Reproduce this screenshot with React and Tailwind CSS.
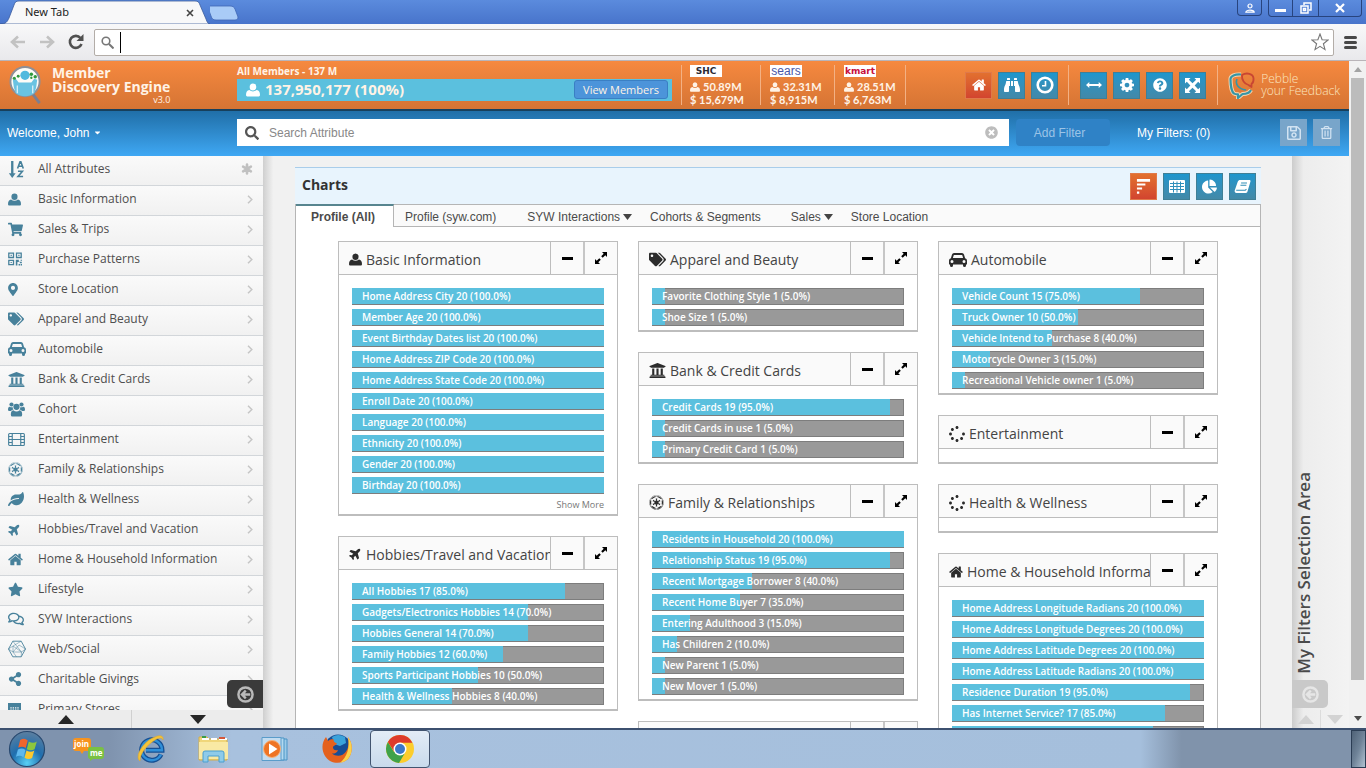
import React from "react";
import {
  FaShoppingCart, FaMapMarkerAlt, FaTags, FaUniversity, FaEmpire, FaLeaf,
  FaPlane, FaStar, FaRegComments, FaShareAlt, FaSpinner, FaBinoculars,
  FaQuestionCircle, FaRegSave, FaRegTrashAlt, FaChartPie,
  FaSearch, FaTimesCircle, FaCaretDown,
} from "react-icons/fa";

function UserIcon(props) {
  return (
    <svg viewBox="0 0 14 13" width="1em" height="1em" fill="currentColor" {...props}>
      <ellipse cx="7" cy="3.500" rx="3.300" ry="3.500" />
      <path d="M1.200 13Q0 13 0 11.600Q0 7.200 3.300 6.600Q5 7.900 7 7.900Q9 7.900 10.700 6.600Q14 7.200 14 11.600Q14 13 12.800 13Z" />
    </svg>
  );
}

function HomeIcon(props) {
  return (
    <svg viewBox="64 128 1664 1536" width="1em" height="1em" fill="currentColor" {...props}>
      <path d="M1472 992v480q0 26-19 45t-45 19h-384v-384h-256v384h-384q-26 0-45-19t-19-45v-480q0-1 .5-3t.5-3l575-474 575 474q1 2 1 6zm223-69l-62 74q-8 9-21 11h-3q-13 0-21-7l-692-577-692 577q-12 8-24 7-13-2-21-11l-62-74q-8-10-7-23.5t11-21.5l719-599q32-26 76-26t76 26l244 204v-195q0-14 9-23t23-9h192q14 0 23 9t9 23v408l219 182q10 8 11 21.5t-7 23.5z" />
    </svg>
  );
}

function CogIcon(props) {
  return (
    <svg viewBox="128 128 1536 1536" width="1em" height="1em" fill="currentColor" {...props}>
      <path d="M1152 896q0-106-75-181t-181-75-181 75-75 181 75 181 181 75 181-75 75-181zm512-109v222q0 12-8 23t-20 13l-185 28q-19 54-39 91 35 50 107 138 10 12 10 25t-9 23q-27 37-99 108t-94 71q-12 0-26-9l-138-108q-44 23-91 38-16 136-29 186-7 28-36 28h-222q-14 0-24.5-8.5t-11.5-21.5l-28-184q-49-16-90-37l-141 107q-10 9-25 9-14 0-25-11-126-114-165-168-7-10-7-23 0-12 8-23 15-21 51-66.5t54-70.5q-27-50-41-99l-183-27q-13-2-21-12.5t-8-23.5v-222q0-12 8-23t19-13l186-28q14-46 39-92-40-57-107-138-10-12-10-24 0-10 9-23 26-36 98.5-107.5t94.5-71.5q13 0 26 10l138 107q44-23 91-38 16-136 29-186 7-28 36-28h222q14 0 24.5 8.5t11.5 21.5l28 184q49 16 90 37l142-107q9-9 24-9 13 0 25 10 129 119 165 170 7 8 7 22 0 12-8 23-15 21-51 66.5t-54 70.5q26 50 41 98l183 28q13 2 21 12.5t8 23.5z" />
    </svg>
  );
}

function SortIcon(props) {
  return (
    <svg viewBox="0 0 16 16" width="1em" height="1em" fill="none" stroke="currentColor" {...props}>
      <path d="M4 0V13" strokeWidth="2.200" />
      <path d="M.8 11.500h6.400L4 16z" fill="currentColor" stroke="none" />
      <path d="M9 7l2.300-6.200h.8L14.400 7M9.800 5h3.800" strokeWidth="1.500" />
      <path d="M9.400 9.600h4.200l-4.200 5h4.800" strokeWidth="1.500" />
    </svg>
  );
}

function QrIcon(props) {
  return (
    <svg viewBox="0 0 14 13" width="1em" height="1em" fill="none" stroke="currentColor" strokeWidth="1.300" {...props}>
      <path d="M.8.7h4.700v4.300H.8zM8.500.7h4.700v4.300H8.500zM.8 7.800h4.700v4.400H.8z" />
      <path d="M2.600 2.300h1.200v1.200H2.600zM10.300 2.300h1.200v1.200h-1.200zM2.600 9.400h1.200v1.200H2.600zM7.800 7.200h3v2h3v1.600h-2v-1.200H9.400V13H7.800zM10.600 11.500H12V13h-1.400zM12.600 11.500H14V13h-1.400zM12.600 7.200H14v1h-1.400z" fill="currentColor" stroke="none" />
    </svg>
  );
}

function CarIcon(props) {
  return (
    <svg viewBox="0 0 18 14" width="1em" height="1em" fill="currentColor" {...props}>
      <path fillRule="evenodd" d="M5 0h8q1.500 0 2 1.500l1.100 3.700Q18 5.800 18 7.500V11q0 .5-.5.500H17V12.500Q17 14 15.500 14T14 12.500v-1H4v1Q4 14 2.500 14T1 12.500v-1H.5Q0 11.500 0 11V7.500Q0 5.800 1.900 5.200L3 1.500Q3.500 0 5 0zM5.200 1.900q-.5 0-.6.500L3.900 5h10.200l-.7-2.600q-.1-.5-.6-.500zM3 6.900a1.500 1.500 0 1 0 0 3 1.500 1.500 0 0 0 0-3zM15 6.900a1.500 1.500 0 1 0 0 3 1.500 1.500 0 0 0 0-3z" />
    </svg>
  );
}

function GroupIcon(props) {
  return (
    <svg viewBox="0 0 18 15" width="1em" height="1em" fill="currentColor" {...props}>
      <circle cx="3.700" cy="2.200" r="2.200" /><circle cx="14.300" cy="2.200" r="2.200" /><circle cx="9" cy="4.700" r="3.300" />
      <path d="M0 8Q0 4.500 1.800 4.500Q3.700 5.500 4.900 4.900Q4.900 6.500 5.800 7.600Q4 7.700 3.200 9H1.500Q0 9 0 8zM18 8Q18 4.500 16.200 4.500Q14.300 5.500 13.100 4.900Q13.100 6.500 12.200 7.600Q14 7.700 14.800 9H16.500Q18 9 18 8z" />
      <path d="M4.600 15Q3 15 3 13Q3 8.600 5.600 8.300Q7.300 9.600 9 9.600Q10.700 9.600 12.400 8.300Q15 8.600 15 13Q15 15 13.400 15Z" />
    </svg>
  );
}

function FilmIcon(props) {
  return (
    <svg viewBox="0 0 18 14" width="1em" height="1em" fill="none" stroke="currentColor" strokeWidth="1.200" {...props}>
      <rect x=".7" y=".7" width="16.600" height="12.600" rx="1" />
      <path d="M4.500.7v12.600M13.500.7v12.600M4.500 7h9M.7 3.800h3.800M.7 7h3.800M.7 10.200h3.800M13.500 3.800h3.800M13.500 7h3.800M13.500 10.200h3.800" />
    </svg>
  );
}

function WebIcon(props) {
  return (
    <svg viewBox="0 0 18 18" width="1em" height="1em" fill="none" stroke="currentColor" strokeWidth="0.900" {...props}>
      <path d="M4.800 1.200h8.400L17.500 9l-4.300 7.800H4.800L.5 9z" />
      <path d="M4.800 1.200L13.500 12 13.200 16.800M13.200 1.200L5 6v6l8.500 0M5 6L.5 9 5 12l3.500 4.800M17.500 9L11 5 5 12M5 6l8.500 6L17.500 9" opacity=".55" />
    </svg>
  );
}

function StoreIcon(props) {
  return (
    <svg viewBox="0 0 14 14" width="1em" height="1em" fill="currentColor" {...props}>
      <path fillRule="evenodd" d="M0 0h14v14H0zM2.500 4.500v1.500H4V4.500zM5 4.500v1.500h1.500V4.500zM7.500 4.500v1.500H9V4.500zM10 4.500v1.500h1.500V4.500zM2.500 7v1.500H4V7zM5 7v1.500h1.500V7zM7.500 7v1.500H9V7zM10 7v1.500h1.500V7z" />
    </svg>
  );
}

function AsteriskIcon() {
  return (
    <svg viewBox="0 0 12 12" width="12" height="12" stroke="#c0c0c0" strokeWidth="2.600" strokeLinecap="round">
      <path d="M6 1.500v9M2.100 3.700l7.800 4.600M9.900 3.700L2.100 8.300" />
    </svg>
  );
}

function ClockIcon() {
  return (
    <svg viewBox="0 0 18 18" width="18" height="18" fill="none" stroke="#fff">
      <circle cx="9" cy="9" r="7.300" strokeWidth="2.600" />
      <path d="M9.500 5v4.800H6" strokeWidth="1.600" />
    </svg>
  );
}

function ArrowsOut() {
  return (
    <svg viewBox="0 0 14 14" width="15" height="15" fill="#fff">
      <path d="M0 0h5.200L3.600 1.700 7 5l3.400-3.300L8.800 0H14v5.200l-1.700-1.600L9 7l3.300 3.400L14 8.800V14H8.800l1.600-1.700L7 9l-3.400 3.300L5.200 14H0V8.800l1.700 1.600L5 7 1.700 3.600 0 5.200z" />
    </svg>
  );
}

function TableIcon() {
  return (
    <svg viewBox="0 0 16 13" width="16" height="13">
      <rect width="16" height="13" rx="1" fill="#fff" />
      <path d="M1 3.500h14M1 6.500h14M1 9.500h14M4.500 1.500v11M8 1.500v11M11.500 1.500v11" stroke="#2f8fbb" strokeWidth="1" />
    </svg>
  );
}

function BookIcon() {
  return (
    <svg viewBox="0 0 18 16" width="17" height="15">
      <path d="M6.500 1h9.800c1 0 1.500.7 1.200 1.600l-3.200 10.600c-.3 1-1 1.600-2 1.600H2.500C1 14.800.3 13.500.7 12.300L3.900 3C4.400 1.700 5.300 1 6.500 1z" fill="#fff" />
      <path d="M7.500 4.300h6.300M6.800 6.700h6.300M2.300 11.900h9.700l1.200-1" stroke="#328fb6" strokeWidth="1.100" fill="none" />
    </svg>
  );
}

function BarsIcon() {
  return (
    <svg viewBox="0 0 16 18" width="15" height="17" fill="#fff">
      <path d="M1 1h14v2.800H1zM1 5.800h9v2.200H1zM1 10h5.500v2.100H1zM1 14.300h2.500v2.300H1z" />
    </svg>
  );
}

function ArrowsH() {
  return (
    <svg viewBox="0 0 16 8" width="16" height="8" fill="#fff">
      <path d="M0 4L3.300 1v2h9.400V1L16 4l-3.300 3V5H3.300v2z" />
    </svg>
  );
}

function ExpandIcon() {
  return (
    <svg viewBox="0 0 12 12" width="12" height="12" fill="#000">
      <path d="M12 0v5l-1.700-1.700L7.700 5.800 6.200 4.300 8.700 1.700 7 0zM0 12V7l1.700 1.700 2.600-2.500 1.500 1.500-2.500 2.600L5 12z" />
    </svg>
  );
}

function LeftCircle() {
  return (
    <svg viewBox="0 0 18 18" width="17" height="17" fill="none" stroke="currentColor" strokeWidth="2.600">
      <circle cx="9" cy="9" r="7.500" />
      <path d="M14 9H6M9.300 5L5.300 9l4 4" />
    </svg>
  );
}

const PlaneUp = (props) => (
  <span className="inline-block -rotate-45">
    <FaPlane {...props} />
  </span>
);

const navItems = [
  ["All Attributes", SortIcon, "size-[17px]"],
  ["Basic Information", UserIcon, "size-[13px]"],
  ["Sales & Trips", FaShoppingCart, "size-[15px]"],
  ["Purchase Patterns", QrIcon, "size-[14px]"],
  ["Store Location", FaMapMarkerAlt, "h-[13px] w-[10px]"],
  ["Apparel and Beauty", FaTags, "size-4"],
  ["Automobile", CarIcon, "size-[18px]"],
  ["Bank & Credit Cards", FaUniversity, "size-[17px]"],
  ["Cohort", GroupIcon, "size-[17px]"],
  ["Entertainment", FilmIcon, "size-[17px]"],
  ["Family & Relationships", FaEmpire, "size-[15px]"],
  ["Health & Wellness", FaLeaf, "size-4"],
  ["Hobbies/Travel and Vacation", PlaneUp, "size-[13px]"],
  ["Home & Household Information", HomeIcon, "size-[15px]"],
  ["Lifestyle", FaStar, "size-[15px]"],
  ["SYW Interactions", FaRegComments, "size-4"],
  ["Web/Social", WebIcon, "size-[18px]"],
  ["Charitable Givings", FaShareAlt, "size-[14px]"],
  ["Primary Stores", StoreIcon, "size-[13px]"],
];

const columns = [
  [
    {
      title: "Basic Information", icon: UserIcon, size: "size-[13px]", more: true,
      rows: [
        ["Home Address City", 20], ["Member Age", 20], ["Event Birthday Dates list", 20],
        ["Home Address ZIP Code", 20], ["Home Address State Code", 20], ["Enroll Date", 20],
        ["Language", 20], ["Ethnicity", 20], ["Gender", 20], ["Birthday", 20],
      ],
    },
    {
      title: "Hobbies/Travel and Vacation", icon: PlaneUp, size: "size-[13px]",
      rows: [
        ["All Hobbies", 17], ["Gadgets/Electronics Hobbies", 14], ["Hobbies General", 14],
        ["Family Hobbies", 12], ["Sports Participant Hobbies", 10], ["Health & Wellness Hobbies", 8],
      ],
    },
  ],
  [
    { title: "Apparel and Beauty", icon: FaTags, size: "size-[17px]", rows: [["Favorite Clothing Style", 1], ["Shoe Size", 1]] },
    {
      title: "Bank & Credit Cards", icon: FaUniversity, size: "size-[17px]",
      rows: [["Credit Cards", 19], ["Credit Cards in use", 1], ["Primary Credit Card", 1]],
    },
    {
      title: "Family & Relationships", icon: FaEmpire, size: "size-[15px]",
      rows: [
        ["Residents in Household", 20], ["Relationship Status", 19], ["Recent Mortgage Borrower", 8],
        ["Recent Home Buyer", 7], ["Entering Adulthood", 3], ["Has Children", 2], ["New Parent", 1], ["New Mover", 1],
      ],
    },
    { title: "Lifestyle", icon: FaStar, size: "size-[15px]", rows: [] },
  ],
  [
    {
      title: "Automobile", icon: CarIcon, size: "size-[18px]",
      rows: [
        ["Vehicle Count", 15], ["Truck Owner", 10], ["Vehicle Intend to Purchase", 8],
        ["Motorcycle Owner", 3], ["Recreational Vehicle owner", 1],
      ],
    },
    { title: "Entertainment", icon: FaSpinner, size: "size-4", rows: [] },
    { title: "Health & Wellness", icon: FaSpinner, size: "size-4", rows: [] },
    {
      title: "Home & Household Information", icon: HomeIcon, size: "size-[14px]",
      rows: [
        ["Home Address Longitude Radians", 20], ["Home Address Longitude Degrees", 20],
        ["Home Address Latitude Degrees", 20], ["Home Address Latitude Radians", 20],
        ["Residence Duration", 19], ["Has Internet Service?", 17], ["Home Owner", 16],
      ],
    },
  ],
];

function BrowserChrome() {
  return (
    <div className="shrink-0 font-['Open_Sans',sans-serif]">
      <div className="flex h-6 items-end bg-linear-to-b from-[#5b8bdd] to-[#4874cb]">
        <div className="relative h-6 w-[210px]">
          <svg viewBox="0 0 210 24" width="210" height="24" className="absolute inset-0">
            <path d="M0 24C6 24 7 22 9 18L14 5C15 2 16 1 19 1H195C198 1 199 2 200 5L206 19C207 22 208 24 210 24Z" fill="#f8f8f9" stroke="#3b5c9d" strokeWidth=".8" />
          </svg>
          <div className="relative flex h-6 items-center justify-between pt-px pr-4 pl-[25px] text-[#222]">
            <span className="font-['Noto_Sans',sans-serif] text-[11px]">New Tab</span>
            <button aria-label="Close tab">
              <svg viewBox="0 0 8 8" width="8" height="8" stroke="#444" strokeWidth="1.600"><path d="M1 1l6 6M7 1L1 7" /></svg>
            </button>
          </div>
        </div>
        <button aria-label="New tab" className="h-full">
          <svg viewBox="0 0 32 24" width="32" height="24">
            <path d="M-2 6H20C23 6 24 7 25 9L28 17C28 19 27 20 25 20H6C3 20 2 19 1 16L-2 8Z" fill="#a9cbf7" stroke="#3f66b4" strokeWidth=".8" />
          </svg>
        </button>
        <div className="mr-1 ml-auto flex gap-[6px] self-start text-white">
          <button aria-label="Account" className="grid h-4 w-[25px] place-items-center rounded-b border border-t-0 border-[#28447e]">
            <svg viewBox="0 0 10 10" width="10" height="10" fill="#5b8bdd" stroke="#fff" strokeWidth="1.200"><circle cx="5" cy="3" r="2" /><path d="M.8 9.200C.8 6.500 9.200 6.500 9.200 9.200Z" /></svg>
          </button>
          <div className="flex divide-x divide-[#28447e] rounded-b border border-t-0 border-[#28447e]">
            <button aria-label="Minimize" className="grid h-4 w-6 place-items-center">
              <span className="mt-1 h-[3px] w-[11px] bg-white" />
            </button>
            <button aria-label="Restore" className="grid h-4 w-[26px] place-items-center">
              <svg viewBox="0 0 12 12" width="12" height="12" fill="none" stroke="#fff" strokeWidth="1.500"><path d="M4 3V1h7v7H9" /><path d="M1 4h7v7H1zM3.500 6.500h2v2h-2z" /></svg>
            </button>
            <button aria-label="Close" className="grid h-4 w-[42px] place-items-center">
              <svg viewBox="0 0 10 10" width="10" height="10" stroke="#fff" strokeWidth="2.200"><path d="M1 1l8 8M9 1L1 9" /></svg>
            </button>
          </div>
        </div>
      </div>
      <div className="flex h-[37px] items-center border-b border-[#b9b4b8] bg-linear-to-b from-[#f8f8f9] to-[#e9e9ec] pl-[10px]">
        <div className="flex items-center gap-[13px] text-[#c2c2c2]">
          <svg viewBox="0 0 16 14" width="16" height="14" fill="none" stroke="currentColor" strokeWidth="2.600"><path d="M15 7H3M8 1.500L2 7l6 5.500" /></svg>
          <svg viewBox="0 0 16 14" width="16" height="14" fill="none" stroke="currentColor" strokeWidth="2.600"><path d="M1 7h12M8 1.500L14 7l-6 5.500" /></svg>
          <svg viewBox="0 0 16 16" width="16" height="16" fill="none" stroke="#505050" strokeWidth="2.600"><path d="M13.500 10A6 6 0 1 1 12.500 4" /><path d="M15.500 0v7H8.500z" fill="#505050" stroke="none" /></svg>
        </div>
        <label className="ml-[10px] flex h-[27px] flex-1 items-center rounded-xs border border-[#b3ada8] bg-white pr-1 pl-[6px]">
          <svg viewBox="0 0 13 13" width="13" height="13" fill="none" stroke="#777" strokeWidth="1.600"><circle cx="5" cy="5" r="3.800" /><path d="M8 8l4.500 4.500" strokeWidth="2" /></svg>
          <span className="ml-[6px] h-[21px] w-px bg-black" />
          <input aria-label="Address" className="h-full flex-1 outline-none" />
          <svg viewBox="0 0 18 18" width="18" height="18" fill="none" stroke="#777" strokeWidth="1.100"><path d="M9 1l2.100 5.700 6 .3-4.700 3.700 1.600 5.900L9 13.300 4 16.600l1.600-5.900L.9 7l6-.3z" /></svg>
        </label>
        <button aria-label="Menu" className="mr-[9px] ml-[10px] flex flex-col gap-[2px]">
          <span className="h-[3px] w-[13px] rounded-xs bg-[#484848]" />
          <span className="h-[3px] w-[13px] rounded-xs bg-[#484848]" />
          <span className="h-[3px] w-[13px] rounded-xs bg-[#484848]" />
        </button>
      </div>
    </div>
  );
}

function SquareButton({ label, active, children }) {
  return (
    <button
      aria-label={label}
      className={
        "grid size-[27px] place-items-center border text-white " +
        (active
          ? "border-[#e0794a] bg-linear-to-b from-[#e2702f] to-[#d2442f]"
          : "border-[#3f7f96] bg-linear-to-b from-[#1c96cd] to-[#4289a8]")
      }
    >
      {children}
    </button>
  );
}

function Divider() {
  return <span className="h-10 w-px bg-[#f3b184]" />;
}

function Stat({ logo, members, sales }) {
  return (
    <div className="pt-px font-['Lato',sans-serif] text-[11px] leading-[13px] font-bold text-[#fff3e6]">
      <div className="mb-[3px] flex h-3 w-8 items-center justify-center bg-white">{logo}</div>
      <div className="flex items-center gap-[3px]"><UserIcon className="size-[10px]" />{members}</div>
      <div>$ {sales}</div>
    </div>
  );
}

function AppHeader() {
  return (
    <header className="flex h-[48px] shrink-0 items-center bg-linear-to-b from-[#f6893f] to-[#d57434] text-[#fff3e6]">
      <div className="flex w-[237px] shrink-0 items-center pl-2">
        <svg viewBox="0 0 36 42" width="35" height="41">
          <path d="M25 29l7.500 10" stroke="#7b7f92" strokeWidth="3" />
          <circle cx="17.500" cy="17" r="15" fill="#fdfcf8" stroke="#8d8f98" strokeWidth="2" />
          <circle cx="17.500" cy="10.500" r="4.800" fill="#51b9de" />
          <path d="M5 15l3-1 3 4h13l3-4 3 1-1 8-2 6c-5 4-14 4-19 0l-2-6z" fill="#6ac3e2" />
          <path d="M9.500 21v8M25.500 21v8" stroke="#fff" strokeWidth="1" />
          <circle cx="6.500" cy="13.500" r="1.600" fill="#2f9a3c" /><circle cx="10.500" cy="11.500" r="1.500" fill="#2f9a3c" />
          <circle cx="24" cy="9.500" r="1.800" fill="#2f9a3c" /><circle cx="28" cy="12" r="1.800" fill="#2f9a3c" /><circle cx="24" cy="13" r="1.200" fill="#2f9a3c" />
        </svg>
        <div className="ml-[9px] pt-px font-['Open_Sans',sans-serif]">
          <h1 className="text-[14px] leading-[14px] font-bold">Member<br />Discovery Engine</h1>
          <p className="text-right text-[9px] leading-[11px]">v3.0</p>
        </div>
      </div>
      <div className="w-[435px] shrink-0 pb-[6px]">
        <div className="font-['Open_Sans',sans-serif] text-[10px] leading-[14px] font-bold">All Members - 137 M</div>
        <div className="mt-px flex h-[22px] items-center bg-[#5bc0de] pr-1 pl-[9px]">
          <UserIcon className="size-[14px] text-white" />
          <span className="ml-[5px] font-['Open_Sans',sans-serif] text-[15px] font-bold">137,950,177 (100%)</span>
          <button className="ml-auto h-[19px] w-[94px] rounded-[3px] border border-[#3a7fc4] bg-[#4c94da] font-['Open_Sans',sans-serif] text-[11px] leading-4">
            View Members
          </button>
        </div>
      </div>
      <div className="ml-[9px] flex items-center">
        <Divider />
        <div className="w-[78px] pl-2">
          <Stat logo={<span className="font-['DejaVu_Sans',sans-serif] text-[9px] font-bold text-[#2b2b33]">SHC</span>} members="50.89M" sales="15,679M" />
        </div>
        <Divider />
        <div className="w-[73px] pl-[9px]">
          <Stat logo={<span className="font-['Liberation_Sans',sans-serif] text-xs font-normal text-[#4a57a8]">sears</span>} members="32.31M" sales="8,915M" />
        </div>
        <Divider />
        <div className="w-[70px] pl-[9px]">
          <Stat logo={<span className="font-['DejaVu_Sans',sans-serif] text-[9px] font-bold text-[#c8103c]">kmart</span>} members="28.51M" sales="6,763M" />
        </div>
        <Divider />
      </div>
      <div className="ml-auto flex items-center pr-[9px]">
        <div className="flex gap-[6px]">
          <SquareButton label="Home" active><HomeIcon className="size-[14px]" /></SquareButton>
          <SquareButton label="Find"><FaBinoculars className="size-4" /></SquareButton>
          <SquareButton label="History"><ClockIcon /></SquareButton>
        </div>
        <span className="ml-[10px] h-10 w-px bg-[#f3b184]" />
        <div className="ml-[11px] flex gap-[6px]">
          <SquareButton label="Resize"><ArrowsH /></SquareButton>
          <SquareButton label="Settings"><CogIcon className="size-[14px]" /></SquareButton>
          <SquareButton label="Help"><FaQuestionCircle className="size-[14px]" /></SquareButton>
          <SquareButton label="Full screen"><ArrowsOut /></SquareButton>
        </div>
        <span className="ml-[11px] h-10 w-px bg-[#f3b184]" />
        <a href="#feedback" className="ml-[10px] flex items-center gap-[5px] font-['Open_Sans',sans-serif] text-xs leading-[12px] font-light text-[#fbe6c0]">
          <svg viewBox="0 0 28 28" width="28" height="28" fill="none" strokeLinejoin="round">
            <path d="M13 3.500C7 3 2.500 5 2.500 8c0 5 1 13 3.500 14.500 1 .8 3 .8 4 .8V27l4.500-4c4 0 7-1 8.500-4" stroke="#f7d9b5" strokeWidth="4" />
            <path d="M13 3.500C7 3 2.500 5 2.500 8c0 5 1 13 3.500 14.500 1 .8 3 .8 4 .8V27l4.500-4c4 0 7-1 8.500-4" stroke="#3695a5" strokeWidth="2.200" />
            <path d="M14 4c5-3 11-1 11.500 3 .3 3-.5 5-2 6v3l-3-2c-4-1-7-5-6.500-10z" stroke="#c94632" strokeWidth="1.800" />
            <path d="M9 8c-2 5 1 10 9 11" stroke="#3695a5" strokeWidth="1.600" />
          </svg>
          <span>Pebble<br />your Feedback</span>
        </a>
      </div>
    </header>
  );
}

function FilterBar() {
  return (
    <div className="flex h-[47px] shrink-0 items-center border-t-2 border-[#17405c] bg-linear-to-b from-[#206fa8] to-[#3fa8f4] pb-[2px] font-['Liberation_Sans',sans-serif] text-xs text-white">
      <button className="flex w-[237px] shrink-0 items-center gap-1 pl-[7px]">
        Welcome, John <FaCaretDown className="size-[9px]" />
      </button>
      <label className="flex h-[27px] flex-1 items-center bg-white pr-[11px] pl-2">
        <FaSearch className="size-[14px] text-[#555]" />
        <input aria-label="Search Attribute" placeholder="Search Attribute" className="ml-[10px] flex-1 text-[#555] outline-none placeholder:text-[#888]" />
        <FaTimesCircle className="size-[13px] text-[#bdbdbd]" />
      </label>
      <button className="ml-[7px] h-[27px] w-[94px] rounded-sm bg-[#2f82c6] pr-[7px] text-[#9cc4e6]">Add Filter</button>
      <span className="ml-[27px] w-[143px]">My Filters: (0)</span>
      <div className="flex gap-[6px] pr-[9px] text-[#d2e3f2]">
        <button aria-label="Save" className="grid size-[27px] place-items-center bg-[#78a5ca]"><FaRegSave className="size-4" /></button>
        <button aria-label="Delete" className="grid size-[27px] place-items-center bg-[#78a5ca]"><FaRegTrashAlt className="size-[13px]" /></button>
      </div>
    </div>
  );
}

function Sidebar() {
  return (
    <nav className="relative flex w-[263px] shrink-0 flex-col">
      <ul className="min-h-0 flex-1 overflow-hidden">
        {navItems.map(([label, Icon, size], i) => (
          <li key={label} className="h-[30px] border-b border-[#d2d6da] bg-linear-to-b from-[#fafafa] to-[#f1f1f1]">
            <a href="#attributes" className="flex h-full items-center pr-[10px] pb-[3px] font-['Open_Sans',sans-serif] text-xs text-[#4e4e4e]">
              <span className="flex w-[38px] shrink-0 pl-2 text-[#47819b]">
                <Icon className={size} />
              </span>
              <span className="flex-1 whitespace-nowrap">{label}</span>
              {i === 0 ? (
                <AsteriskIcon />
              ) : (
                <svg viewBox="0 0 6 9" width="6" height="9" fill="none" stroke="#c6c6c6" strokeWidth="1.500"><path d="M1 .7L4.800 4.500 1 8.300" /></svg>
              )}
            </a>
          </li>
        ))}
      </ul>
      <div className="flex h-[18px] divide-x divide-[#d0d0d0] bg-[#ececec]">
        <button aria-label="Scroll up" className="grid flex-1 place-items-center">
          <svg viewBox="0 0 16 9" width="16" height="9" fill="#262626"><path d="M8 0l8 9H0z" /></svg>
        </button>
        <button aria-label="Scroll down" className="grid flex-1 place-items-center">
          <svg viewBox="0 0 16 9" width="16" height="9" fill="#262626"><path d="M8 9L0 0h16z" /></svg>
        </button>
      </div>
      <button aria-label="Collapse sidebar" className="absolute right-0 bottom-5 grid h-7 w-9 place-items-center rounded-l-[5px] bg-[#3a3a3a] text-[#b9b9b9]">
        <LeftCircle />
      </button>
    </nav>
  );
}

function ChartCard({ title, icon: Icon, size, rows, more }) {
  return (
    <section className="border border-b-2 border-[#bdbdbd] bg-white">
      <header className="flex h-[33px] border-b border-[#bdbdbd] bg-[#fafafa]">
        <h3 className="flex min-w-0 flex-1 items-center gap-1 overflow-hidden pt-[3px] pl-[10px] font-['Open_Sans',sans-serif] text-sm whitespace-nowrap text-[#444]">
          <span className="shrink-0 text-[#2c2c2c]">
            <Icon className={size} />
          </span>
          {title}
        </h3>
        <button aria-label="Collapse" className="grid w-[33px] place-items-center border-l border-[#bdbdbd]">
          <span className="h-[3px] w-[11px] bg-black" />
        </button>
        <button aria-label="Expand" className="grid w-[34px] place-items-center border-l-2 border-[#c6c6c6]">
          <ExpandIcon />
        </button>
      </header>
      <div className="px-[13px] pt-[13px]">
        {rows.map(([label, n]) => (
          <div key={label} className="relative mb-1 h-[17px] border border-l-0 border-[#7d7d7d] bg-[#999]">
            <div className="absolute -top-px left-0 h-4 bg-[#5bc0de]" style={{ width: n === 20 ? "calc(100% + 1px)" : `${n * 5}%` }} />
            <span className="relative block pl-[10px] font-['Open_Sans',sans-serif] text-[10px] leading-[15px] font-semibold whitespace-nowrap text-white">
              {label} {n} ({n * 5}.0%)
            </span>
          </div>
        ))}
        {more && (
          <a href="#more" className="block h-4 text-right font-['Open_Sans',sans-serif] text-[9px] leading-[14px] text-[#777]">Show More</a>
        )}
      </div>
    </section>
  );
}

const tabs = [
  ["Profile (syw.com)", false, "pl-[11px] pr-[15px]"],
  ["SYW Interactions", true, "pl-4 pr-[9px]"],
  ["Cohorts & Segments", false, "pl-[9px] pr-[15px]"],
  ["Sales", true, "pl-[15px] pr-[9px]"],
  ["Store Location", false, "pl-[9px] pr-4"],
];

function Charts() {
  return (
    <main className="min-w-0 flex-1 overflow-hidden bg-linear-to-r from-[#cfcfcf] via-[#f1f1f1] via-1% to-[#f1f1f1] pt-[11px] pr-[31px] pl-8">
      <div className="flex h-[37px] items-center border-t border-[#a9cdea] bg-[#e8f4fd] pr-[5px] pl-[7px]">
        <h2 className="flex-1 pb-[2px] font-['Open_Sans',sans-serif] text-sm font-bold text-[#333]">Charts</h2>
        <div className="flex gap-[6px]">
          <SquareButton label="Bar view" active><BarsIcon /></SquareButton>
          <SquareButton label="Table view"><TableIcon /></SquareButton>
          <SquareButton label="Pie view"><FaChartPie className="size-[15px]" /></SquareButton>
          <SquareButton label="Book view"><BookIcon /></SquareButton>
        </div>
      </div>
      <div className="border-x border-[#b5b5b5] bg-white pb-5">
        <div className="flex h-[23px] font-['Liberation_Sans',sans-serif] text-xs text-[#4a4a4a]">
          <button className="w-[98px] border-t-2 border-r border-t-[#57858f] border-r-[#b5b5b5] pr-[3px] font-bold">Profile (All)</button>
          <div className="flex flex-1 border-y border-[#b5b5b5] bg-[#fafafa] pt-[2px]">
            {tabs.map(([label, menu, pad]) => (
              <button key={label} className={"flex items-center gap-[3px] " + pad}>
                {label}
                {menu && <svg viewBox="0 0 9 6" width="9" height="6" fill="#444"><path d="M0 0h9L4.500 6z" /></svg>}
              </button>
            ))}
          </div>
        </div>
        <div className="grid grid-cols-3 items-start gap-5 px-[42px] pt-[14px]">
          {columns.map((cards, i) => (
            <div key={i} className="flex min-w-0 flex-col gap-5">
              {cards.map((card) => <ChartCard key={card.title} {...card} />)}
            </div>
          ))}
        </div>
      </div>
    </main>
  );
}

function FilterArea() {
  return (
    <aside className="flex w-[57px] shrink-0 flex-col bg-linear-to-r from-[#cccccc] from-0% via-[#ededed] via-20% to-[#f3f3f3]">
      <div className="flex flex-1 items-end pb-[6px] pl-[2px]">
        <h2 className="rotate-180 font-['Open_Sans',sans-serif] text-[17px] leading-5 font-semibold whitespace-nowrap text-[#4a4a4a] [writing-mode:vertical-rl]">
          My Filters Selection Area
        </h2>
      </div>
      <button aria-label="Expand filters" className="grid h-7 w-9 place-items-center rounded-r-[5px] bg-[#c9c9c9] text-[#e6e6e6]"><LeftCircle /></button>
      <div className="mt-[2px] flex h-[18px] divide-x divide-[#dcdcdc]">
        <button aria-label="Scroll filters up" className="grid flex-1 place-items-center">
          <svg viewBox="0 0 16 9" width="16" height="9" fill="#d3d3d3"><path d="M8 0l8 9H0z" /></svg>
        </button>
        <button aria-label="Scroll filters down" className="grid flex-1 place-items-center">
          <svg viewBox="0 0 16 9" width="16" height="9" fill="#d3d3d3"><path d="M8 9L0 0h16z" /></svg>
        </button>
      </div>
    </aside>
  );
}

function ScrollBar() {
  return (
    <div className="flex w-[17px] shrink-0 flex-col items-center bg-[#f1f1f1] px-[2px]">
      <span className="grid h-[17px] place-items-center">
        <svg viewBox="0 0 8 5" width="8" height="5" fill="#a3a3a3"><path d="M4 0l4 5H0z" /></svg>
      </span>
      <span className="w-full flex-1 bg-[#bcbcbc]" />
      <span className="grid h-[48px] place-items-center pt-7">
        <svg viewBox="0 0 8 5" width="8" height="5" fill="#4c4c4c"><path d="M4 5L0 0h8z" /></svg>
      </span>
    </div>
  );
}

function Taskbar() {
  return (
    <footer className="flex h-10 shrink-0 items-center border-t-2 border-[#3c506f] bg-[linear-gradient(90deg,#7f93ae_0%,#7f93ae_8%,#a8c1de_17%,#a5bfdc_83.5%,#8093ab_86.5%,#8093ab_100%)] pl-2">
      <button aria-label="Start">
        <svg viewBox="0 0 38 38" width="38" height="38">
          <defs>
            <radialGradient id="orb" cx=".5" cy=".9" r=".9"><stop offset="0" stopColor="#5ad0f5" /><stop offset=".5" stopColor="#1f6eae" /><stop offset="1" stopColor="#5d7f9f" /></radialGradient>
          </defs>
          <circle cx="19" cy="19" r="17.500" fill="url(#orb)" stroke="#27486f" strokeWidth="1.200" />
          <path d="M12.200 10q4.300-2.500 7.500.5l-2 7.600q-3.300-2.500-7.500-.5z" fill="#f0652d" />
          <path d="M20.800 11.500q4.500 2.500 8 0l-2.200 7.700q-3.700 2.300-7.800 0z" fill="#8cc63e" />
          <path d="M9.900 19.500q4.300-2 7.500.5l-2 7.200q-3.500-2.500-7.400-.5z" fill="#5fb8ee" />
          <path d="M18.500 20.600q4.300 2.500 7.800 0l-2.200 7.400q-3.700 2.300-7.600-.3z" fill="#fdc92e" />
        </svg>
      </button>
      <button aria-label="join.me" className="ml-[26px]">
        <svg viewBox="0 0 34 26" width="34" height="26" fontFamily="Open Sans, sans-serif" fontWeight="700" fill="#fff">
          <path d="M4 2h12q3 0 3 3v7q0 3-3 3h-4l-2 3-2-3H4q-3 0-3-3V5q0-3 3-3z" fill="#f7931e" />
          <path d="M18 11h11q3 0 3 3v6q0 3-3 3h-8l-3 2v-2q-2 0-2-3v-6q0-3 2-3z" fill="#7ac143" />
          <text x="2" y="11" fontSize="8">join</text><text x="18" y="20" fontSize="8">me</text>
        </svg>
      </button>
      <button aria-label="Internet Explorer" className="ml-[29px]">
        <svg viewBox="0 0 32 32" width="32" height="32" fill="none">
          <path d="M26 21.500A10.200 10.200 0 1 1 27 17.200H11" stroke="#154f93" strokeWidth="5" />
          <path d="M26 21.500A10.200 10.200 0 1 1 27 17.200H11" stroke="#2f8fd8" strokeWidth="2.400" />
          <path d="M5 28C-1 24 8 8 20 4c4-2 9-2 8 3-1-3-5-2-8 0C12 12 5 20 5 28z" fill="#f4c43a" stroke="#e0a828" strokeWidth=".6" />
        </svg>
      </button>
      <button aria-label="File explorer" className="ml-[30px]">
        <svg viewBox="0 0 34 32" width="34" height="32">
          <path d="M2 4h8l2 2h18v21H2z" fill="#f0d67a" stroke="#d3ae48" />
          <path d="M5 6h7M14 6h6M22 6h8" stroke="#fff" strokeWidth="2" /><path d="M5 4h4" stroke="#3a9c49" strokeWidth="2" /><path d="M22 5h6" stroke="#d4573a" strokeWidth="2" />
          <path d="M2 9h29v17H2z" fill="#f9e9a4" />
          <path d="M6 29V20q0-2 2-2h17q2 0 2 2v9h-5v-6H11v6z" fill="#8fcbe9" stroke="#4a9fd0" />
        </svg>
      </button>
      <button aria-label="Media player" className="ml-[30px]">
        <svg viewBox="0 0 28 28" width="28" height="28">
          <path d="M8 4h18v21H8z" fill="#9ccbe9" stroke="#4b94c5" /><path d="M5 3h18v22H5z" fill="#b3d9f0" stroke="#4b94c5" /><path d="M1 2.500h19v23H1z" fill="#c3dcf0" stroke="#5a9cca" />
          <circle cx="11" cy="14" r="8.500" fill="#ee7424" stroke="#f6b27c" /><path d="M8 8.500l8.500 5.500L8 19.500z" fill="#fff" />
        </svg>
      </button>
      <button aria-label="Firefox" className="ml-[32px]">
        <svg viewBox="0 0 32 32" width="32" height="32">
          <circle cx="17" cy="14.500" r="13" fill="#174d94" />
          <path d="M11 4q6-4 13 0l1 6-6 3-6-2z" fill="#3ba3da" />
          <path d="M27 4c5 6 5 16 0 22-7 6-18 5-23-3C0 16 1 9 5 4l2 4c2-2 4-2 6-1.500-1 1.500 0 3 3 4-1 2-4 2-4 4s2 3.500 5 2.500c-1 3-4 4-6 3.500 4 3.500 11 3 14-2 3-4 3-9 2-14.500z" fill="#e4611d" />
          <path d="M27 4c5 6 5 16 0 22-2 2-5 3-8 4 7-6 10-15 8-26z" fill="#fbd24a" />
        </svg>
      </button>
      <button aria-label="Chrome" className="ml-[17px] grid h-[38px] w-[60px] place-items-center rounded-sm border border-[#42546f] bg-linear-to-b from-[#e3ecf6] to-[#c9daec]">
        <svg viewBox="0 0 30 30" width="30" height="30">
          <circle cx="15" cy="15" r="14" fill="#fccd2c" />
          <path d="M2.900 8A14 14 0 0 0 14 29l6.200-10.500L9 18z" fill="#3fa24a" />
          <path d="M2.900 8A14 14 0 0 1 27.400 8.700H15L9.500 18z" fill="#dd3b2b" />
          <circle cx="15" cy="15" r="6.500" fill="#fff" /><circle cx="15" cy="15" r="5" fill="#3a78c9" />
        </svg>
      </button>
      <button aria-label="Show desktop" className="ml-auto h-full w-[15px] border border-[#2b3d54] bg-linear-to-br from-[#4f6277] via-[#6f8398] to-[#b3c3d2]" />
    </footer>
  );
}

export default function App() {
  return (
    <div className="flex h-screen flex-col overflow-hidden bg-white">
      <BrowserChrome />
      <div className="flex min-h-0 flex-1">
        <div className="flex min-w-0 flex-1 flex-col">
          <AppHeader />
          <FilterBar />
          <div className="flex min-h-0 flex-1">
            <Sidebar />
            <Charts />
            <FilterArea />
          </div>
        </div>
        <ScrollBar />
      </div>
      <Taskbar />
    </div>
  );
}
